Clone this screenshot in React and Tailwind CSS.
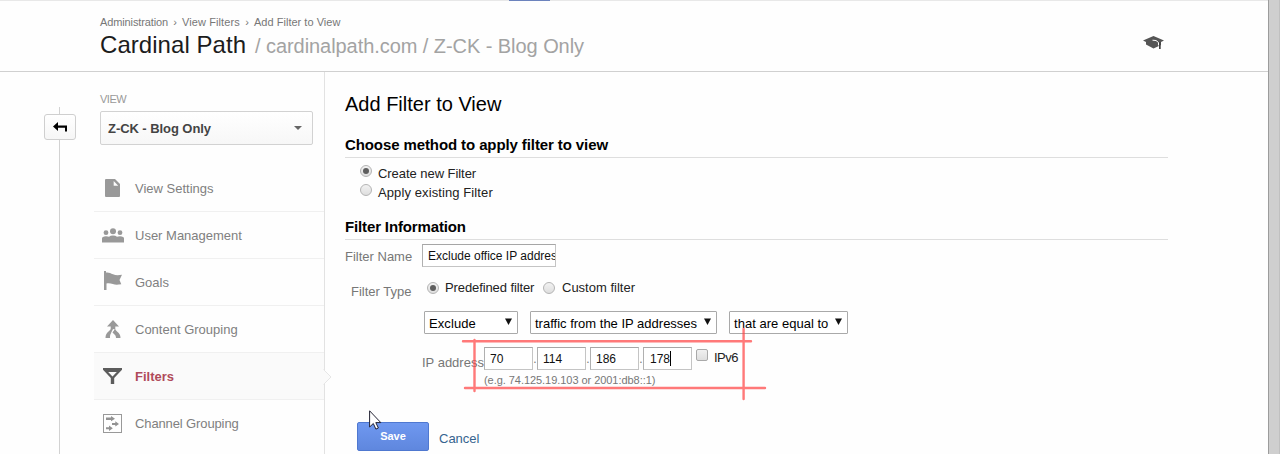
import React from "react";

const field =
  "h-[23px] border border-[#c4c4c4] border-t-[#a6a6a6] border-l-[#b0b0b0] bg-white pl-[5px] pr-0 text-[12px] leading-[21px] text-[#111] outline-none";

function Radio({ checked, className = "" }) {
  return (
    <span
      className={
        "flex h-[12px] w-[12px] shrink-0 items-center justify-center rounded-full border border-[#b4b4b4] bg-linear-to-b from-[#f2f2f2] to-[#dedede] " +
        className
      }
    >
      {checked && <span className="h-[6px] w-[6px] rounded-full bg-[#5e5e5e]" />}
    </span>
  );
}

function Select({ children, className }) {
  return (
    <button
      className={
        "flex h-[23px] items-start justify-between rounded-[1px] border border-[#a9a9a9] bg-white pl-[4px] pr-[5px] text-[13px] leading-[23px] text-black " +
        className
      }
    >
      <span className="whitespace-nowrap">{children}</span>
      <svg className="mt-[6px] h-[7px] w-[7px]" viewBox="0 0 7 7">
        <path d="M0 .5h7L3.500 7z" fill="#111" />
      </svg>
    </button>
  );
}

function PageIcon() {
  return (
    <svg width="15" height="18" viewBox="0 0 15 18">
      <path d="M1 0h9l5 5v12a1 1 0 0 1-1 1H1a1 1 0 0 1-1-1V1a1 1 0 0 1 1-1z" fill="#999" />
      <path d="M8.700 2v4.700h4.500z" fill="#fdfdfd" />
    </svg>
  );
}

function UsersIcon() {
  return (
    <svg width="22" height="15" viewBox="0 0 22 15" fill="#999">
      <circle cx="4" cy="4.700" r="2.400" />
      <circle cx="11" cy="3.200" r="3" />
      <circle cx="18" cy="4.700" r="2.400" />
      <path d="M0 14.500v-4Q0 8.500 4 8.300q2 0 3 .5Q8.500 7.600 11 7.600t4 1.200q1-.5 3-.5 4 .2 4 2.200v4z" />
    </svg>
  );
}

function FlagIcon() {
  return (
    <svg width="18" height="19" viewBox="0 0 18 19" fill="#999">
      <path d="M0 0h2v1.500c2.500-.5 4.500.6 7 1.800 2.500 1 5 1 9 .5L15.500 9l1.800 4.200c-4 .6-6 .6-8.500-.2-2-.7-4-1-6.300-.6V19H0z" />
    </svg>
  );
}

function MergeIcon() {
  return (
    <svg width="16" height="18" viewBox="0 0 16 18" fill="#999">
      <path d="M8 0l6 6.500h-3.700v2.200c0 1 .5 1.600 2 3C14.500 13.500 15.500 15 15.500 18H11c0-2-.5-2.700-3-5l-.5-.6 2-3L7 8.500 5.700 6.500H2z" />
      <path d="M5.700 6.500H8v2.500L6.500 12.500C5.200 14 5 15.500 5 18H.5c0-3 1-4.800 3-6.400 1.700-1.400 2.200-2 2.200-3z" />
      <path d="M9 9.500l-2.500 3" stroke="#fdfdfd" strokeWidth="1" />
    </svg>
  );
}

function FunnelIcon() {
  return (
    <svg width="19" height="16" viewBox="0 0 19 16">
      <path d="M0 0h19v1.800L11.200 10v6H7.800v-6L0 1.800z" fill="#5c5c5c" />
      <path d="M5.200 4h8.600L9.500 8.600z" fill="#fafafa" />
    </svg>
  );
}

function ChannelIcon() {
  return (
    <svg width="19" height="19" viewBox="0 0 19 19">
      <rect x=".5" y=".5" width="18" height="18" fill="none" stroke="#999" />
      <g fill="#929292">
        <path d="M3 3.500h5V2l4 2.700-4 2.600V6H3z" />
        <path d="M9 8.900h3.300V7.300l3.700 2.600-3.700 2.700V11H9z" />
        <path d="M3 13.200h3v-1.600l3.800 2.600L6 16.900v-1.600H3z" />
      </g>
    </svg>
  );
}

const navItems = [
  { label: "View Settings", Icon: PageIcon },
  { label: "User Management", Icon: UsersIcon },
  { label: "Goals", Icon: FlagIcon, lift: true },
  { label: "Content Grouping", Icon: MergeIcon },
  { label: "Filters", Icon: FunnelIcon, active: true },
  { label: "Channel Grouping", Icon: ChannelIcon, last: true },
];

function NavItem({ label, Icon, active, last, lift }) {
  return (
    <a
      className={
        "relative flex h-[47px] shrink-0 items-center text-[13px] leading-[47px] " +
        (last ? "tracking-[-0.12px] " : "border-b border-[#f0f0f0] ") +
        (active ? "bg-[#fafafa] font-bold text-[#b04a5a]" : "text-[#808080]")
      }
    >
      <span className={"flex w-[37px] justify-center " + (lift ? "-mt-[3px]" : "")}>
        <Icon />
      </span>
      <span className="ml-[4px] h-[47px]">{label}</span>
      {active && (
        <svg className="absolute -right-[8px] top-[16px]" width="9" height="16" viewBox="0 0 9 16">
          <path d="M0 0l8 8-8 8z" fill="#fafafa" />
          <path d="M.5.500L8 8 .5 15.500" fill="none" stroke="#e6e6e6" />
        </svg>
      )}
    </a>
  );
}

function Header() {
  return (
    <header className="h-[72px] shrink-0 border-b border-[#d0d0d0]">
      <div className="h-px bg-[#e8e8e8] pl-[509px]">
        <div className="h-px w-[41px] bg-[#6c83bd]" />
      </div>
      <div className="flex justify-between pl-[100px] pr-[104px]">
        <div>
          <nav className="mt-[13px] flex h-[16px] whitespace-pre text-[11px] leading-[16px] text-[#777]">
            <span className="w-[68px] tracking-[-0.12px]">Administration</span>
            <span className="w-[14px] text-center">›</span>
            <span className="w-[58px] tracking-[0.1px]">View Filters</span>
            <span className="w-[14px] text-center">›</span>
            <span className="tracking-[0.02px]">Add Filter to View</span>
          </nav>
          <h1 className="flex h-[30px] items-baseline whitespace-nowrap leading-[30px]">
            <span className="w-[155px] text-[24px] tracking-[0.05px] text-[#1c1c1c]">Cardinal Path</span>
            <span className="text-[20px] tracking-[-0.06px] text-[#a3a3a3]">/ cardinalpath.com / Z-CK - Blog Only</span>
          </h1>
        </div>
        <svg className="mt-[35px]" width="21" height="13" viewBox="0 0 21 13">
          <path d="M10.500 0L21 4.500l-3 1.500v3l-7.500 3.500L3 8.500V6L0 4.500z" fill="#555" />
          <path d="M9.500 4.200q4-.5 6 2.300v3" fill="none" stroke="#fdfdfd" strokeWidth="1" />
          <path d="M16 6h1.700v7H16z" fill="#444" />
        </svg>
      </div>
    </header>
  );
}

function Sidebar() {
  return (
    <aside className="flex w-[325px] shrink-0 border-r border-[#e2e2e2]">
      <div className="ml-[44px] flex w-[32px] flex-col items-center pt-[35px]">
        <div className="-ml-px h-[7px] w-px bg-[#d2d2d2]" />
        <button className="flex h-[26px] w-[32px] shrink-0 items-center justify-center rounded-[3px] border border-[#cfcfcf] bg-linear-to-b from-white to-[#f6f6f6]">
          <svg width="14" height="10" viewBox="0 0 14 10">
            <path d="M0 4.500L5 0v3.600h9V9.500h-2V5.800H5V9z" fill="#000" />
          </svg>
        </button>
        <div className="-ml-px w-px flex-1 bg-[#d2d2d2]" />
      </div>
      <div className="ml-[18px] flex flex-1 flex-col">
        <div className="ml-[6px] mt-[19px] h-[20px] text-[11px] leading-[16px] tracking-[-0.5px] text-[#999]">VIEW</div>
        <button className="ml-[6px] flex h-[34px] w-[213px] items-center justify-between rounded-[2px] border border-[#d2d2d2] bg-linear-to-b from-white to-[#f7f7f7] pl-[7px] pr-[10px] text-[13px] font-bold tracking-[-0.06px] text-[#444]">
          <span className="pt-px">Z-CK - Blog Only</span>
          <svg width="8" height="4" viewBox="0 0 8 4">
            <path d="M0 0h8L4 4z" fill="#666" />
          </svg>
        </button>
        <nav className="mt-[20px] flex flex-col">
          {navItems.map((item) => (
            <NavItem key={item.label} {...item} />
          ))}
        </nav>
      </div>
    </aside>
  );
}

function IpRow() {
  return (
    <div className="relative mt-[13px] flex h-[42px] pl-[77px]">
      <span className="mt-[5px] w-[62px] shrink-0 whitespace-nowrap text-[13px] leading-[21px] text-[#777]">IP address</span>
      <div>
        <div className="flex h-[23px] text-[12px]">
          <input readOnly defaultValue="70" className={field + " w-[49px]"} />
          <span className="w-[4px] text-center leading-[25px] text-[#777]">.</span>
          <input readOnly defaultValue="114" className={field + " w-[49px]"} />
          <span className="w-[4px] text-center leading-[25px] text-[#777]">.</span>
          <input readOnly defaultValue="186" className={field + " w-[49px]"} />
          <span className="w-[4px] text-center leading-[25px] text-[#777]">.</span>
          <div className={field + " flex w-[49px]"}>
            <span className="pl-px pt-px">178</span>
            <span className="mt-[3px] h-[15px] w-px bg-black" />
          </div>
          <span className="ml-[4px] mt-[2px] h-[12px] w-[12px] rounded-[2px] border border-[#a9a9a9] bg-linear-to-b from-[#f0f0f0] to-[#dedede]" />
          <span className="ml-[6px] text-[13px] leading-[21px] tracking-[-0.5px] text-[#222]">IPv6</span>
        </div>
        <div className="mt-[2px] whitespace-nowrap text-[11px] leading-[16px] tracking-[-0.05px] text-[#777]">
          (e.g. 74.125.19.103 or 2001:db8::1)
        </div>
      </div>
      <svg
        className="pointer-events-none absolute left-[115px] -top-[21px]"
        width="310"
        height="76"
        viewBox="460 326 310 76"
        fill="none"
        stroke="#ff4040"
        strokeOpacity=".7"
        strokeWidth="2.400"
        strokeLinecap="round"
      >
        <path d="M463 341.300H751M465 388H765M474.500 340V391M743.600 329V399" />
      </svg>
    </div>
  );
}

function Main() {
  return (
    <main className="flex-1 pl-[20px] pr-[100px]">
      <h2 className="mt-[20px] h-[24px] text-[20px] leading-[24px] text-black">Add Filter to View</h2>
      <h3 className="mt-[19px] h-[23px] border-b border-[#dedede] text-[15px] font-bold leading-[20px] tracking-[-0.1px] text-black">
        Choose method to apply filter to view
      </h3>
      <div className="mt-[6px] pl-[15px] text-[13px] leading-[19px] text-[#222]">
        <label className="flex h-[19px] tracking-[-0.05px]">
          <Radio checked className="mr-[6px] mt-[1px]" />
          Create new Filter
        </label>
        <label className="flex h-[19px] tracking-[0.1px]">
          <Radio className="mr-[6px] mt-[1px]" />
          Apply existing Filter
        </label>
      </div>
      <h3 className="mt-[15px] h-[23px] border-b border-[#dedede] text-[15px] font-bold leading-[20px] tracking-[-0.14px] text-black">
        Filter Information
      </h3>
      <div className="mt-[4px] flex h-[23px] text-[13px]">
        <span className="w-[77px] pt-px leading-[24px] text-[#777]">Filter Name</span>
        <input readOnly defaultValue="Exclude office IP address" className={field + " w-[134px]"} />
      </div>
      <div className="mt-[11px] flex h-[24px] text-[13px] leading-[19px] text-[#222]">
        <span className="w-[82px] pl-[6px] pt-[4px] text-[#777]">Filter Type</span>
        <Radio checked className="mt-[4px]" />
        <span className="ml-[6px] w-[98px] tracking-[-0.1px]">Predefined filter</span>
        <Radio className="mt-[4px]" />
        <span className="ml-[7px]">Custom filter</span>
      </div>
      <div className="mt-[9px] flex gap-[12px] pl-[79px]">
        <Select className="w-[94px] tracking-[0.08px]">Exclude</Select>
        <Select className="w-[187px]">traffic from the IP addresses</Select>
        <Select className="w-[119px]">
          <span className="tracking-[0.02px]">that are equal to</span>
        </Select>
      </div>
      <IpRow />
      <div className="relative mt-[33px] flex pl-[12px]">
        <button className="h-[29px] w-[72px] rounded-[2px] border border-[#4f78d0] bg-linear-to-b from-[#6f98f0] to-[#5f87de] text-[11px] font-bold leading-[27px] text-white">
          Save
        </button>
        <a className="ml-[10px] mt-[6px] text-[13px] leading-[21px] text-[#36648f]">Cancel</a>
        <svg className="absolute left-[24px] -top-[12px]" width="13" height="20" viewBox="0 0 13 20">
          <path d="M.6.800v16.200l3.700-3.500 2.600 5.600 2.500-1.100-2.600-5.400h5z" fill="#fff" stroke="#223" strokeWidth="1" />
        </svg>
      </div>
    </main>
  );
}

export default function App() {
  return (
    <div className="flex h-[454px] w-[1280px] overflow-hidden bg-[#fefefe] font-['Liberation_Sans',Arial,sans-serif]">
      <div className="flex w-[1268px] flex-col">
        <Header />
        <div className="flex min-h-0 flex-1">
          <Sidebar />
          <Main />
        </div>
      </div>
      <div className="w-[12px] border-l border-r border-l-[#9c9c9c] border-r-[#c0c0c0] bg-[#cfcfcf]" />
    </div>
  );
}
